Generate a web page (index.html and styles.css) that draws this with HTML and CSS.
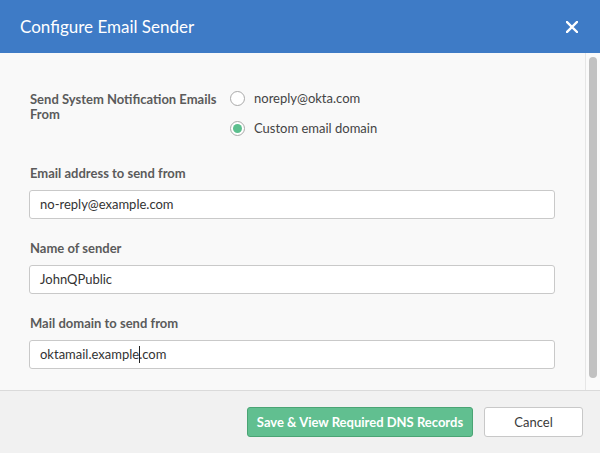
FILE: index.html
```html
<!DOCTYPE html>
<html>
<head>
<meta charset="utf-8">
<title>Configure Email Sender</title>
<link rel="stylesheet" href="styles.css">
</head>
<body>
<div class="modal">
  <header class="modal-header">
    <h1 class="modal-title">Configure Email Sender</h1>
    <button class="close-btn" aria-label="Close">
      <svg width="12" height="12" viewBox="0 0 12 12"><path d="M1 1 L11 11 M11 1 L1 11" stroke="#fff" stroke-width="2.4" stroke-linecap="square" fill="none"/></svg>
    </button>
  </header>
  <div class="modal-body">
    <div class="content">
      <div class="radio-row">
        <div class="field-label radio-label">Send System Notification Emails From</div>
        <div class="radio-options">
          <div class="radio-option"><span class="radio"></span><span class="radio-text">noreply@okta.com</span></div>
          <div class="radio-option"><span class="radio checked"><span class="dot"></span></span><span class="radio-text">Custom email domain</span></div>
        </div>
      </div>
      <div class="field">
        <div class="field-label">Email address to send from</div>
        <div class="input">no-reply@example.com</div>
      </div>
      <div class="field">
        <div class="field-label">Name of sender</div>
        <div class="input">JohnQPublic</div>
      </div>
      <div class="field">
        <div class="field-label">Mail domain to send from</div>
        <div class="input">oktamail.example<span class="caret"></span>.com</div>
      </div>
    </div>
    <div class="scrollbar"><div class="thumb"></div></div>
  </div>
  <footer class="modal-footer">
    <button class="btn btn-primary">Save &amp; View Required DNS Records</button>
    <button class="btn btn-default">Cancel</button>
  </footer>
</div>
</body>
</html>
```

FILE: styles.css
```css
* { box-sizing: border-box; }
html, body { margin: 0; padding: 0; }
body {
  width: 600px;
  height: 453px;
  overflow: hidden;
  font-family: Lato, "Open Sans", "Liberation Sans", sans-serif;
  color: #333;
}
.modal {
  display: flex;
  flex-direction: column;
  height: 453px;
}
.modal-header {
  height: 53px;
  flex: 0 0 53px;
  background: #3e7bc6;
  display: flex;
  align-items: center;
  justify-content: space-between;
  padding: 0 21px 0 20px;
}
.modal-title {
  margin: 0;
  font-size: 17px;
  font-weight: 400;
  color: #fff;
  line-height: 20px;
  padding-top: 1px;
}
.close-btn {
  background: none;
  border: 0;
  padding: 0;
  width: 14px;
  height: 14px;
  display: flex;
  align-items: center;
  justify-content: center;
  margin-top: 1px;
}
.modal-body {
  flex: 1 1 auto;
  min-height: 0;
  overflow: hidden;
  display: flex;
  background: #f9f9f9;
}
.content {
  flex: 1;
  padding: 37px 30px 0 29px;
}
.radio-row {
  display: flex;
  margin-bottom: 29px;
}
.field-label {
  font-size: 13px;
  font-weight: 700;
  color: #5b5b5b;
  line-height: 16px;
  padding-left: 1px;
}
.radio-label {
  width: 201px;
  padding-top: 2px;
  line-height: 15px;
}
.radio-options {
  display: flex;
  flex-direction: column;
  gap: 14px;
}
.radio-option {
  display: flex;
  align-items: center;
  height: 16px;
}
.radio {
  width: 15px;
  height: 15px;
  border: 1px solid #a9a9a9;
  border-radius: 50%;
  background: #fff;
  display: flex;
  align-items: center;
  justify-content: center;
  margin-right: 9px;
}
.dot {
  width: 9px;
  height: 9px;
  border-radius: 50%;
  background: #5cbf8e;
}
.radio-text {
  font-size: 13px;
  color: #444;
}
.field {
  margin-bottom: 21px;
}
.field .field-label {
  margin-bottom: 9px;
}
.input {
  height: 29px;
  border: 1px solid #c9c9c9;
  border-radius: 3px;
  background: #fff;
  font-size: 13px;
  line-height: 27px;
  padding-left: 10px;
  color: #333;
}
.caret {
  display: inline-block;
  width: 1px;
  height: 17px;
  background: #222;
  vertical-align: -4px;
  margin-right: -1px;
}
.scrollbar {
  width: 15px;
  flex: 0 0 15px;
  border-left: 1px solid #e6e6e6;
  padding: 4px 3px 12px 3px;
  display: flex;
  background: #fafafa;
}
.thumb {
  flex: 1;
  background: #c1c1c1;
  border-radius: 4px;
}
.modal-footer {
  height: 63px;
  flex: 0 0 63px;
  background: #f1f1f1;
  border-top: 1px solid #dadada;
  display: flex;
  justify-content: flex-end;
  align-items: flex-start;
  gap: 11px;
  padding: 16px 17px 0 0;
}
.btn {
  height: 30px;
  border-radius: 3px;
  font-family: Lato, "Open Sans", "Liberation Sans", sans-serif;
  font-size: 13px;
  padding: 0;
}
.btn-primary {
  width: 226px;
  background: #61bf90;
  border: 1px solid #4aa474;
  color: #fff;
  font-weight: 700;
}
.btn-default {
  width: 99px;
  background: #fff;
  border: 1px solid #c8c8c8;
  color: #3a3a3a;
}
```
